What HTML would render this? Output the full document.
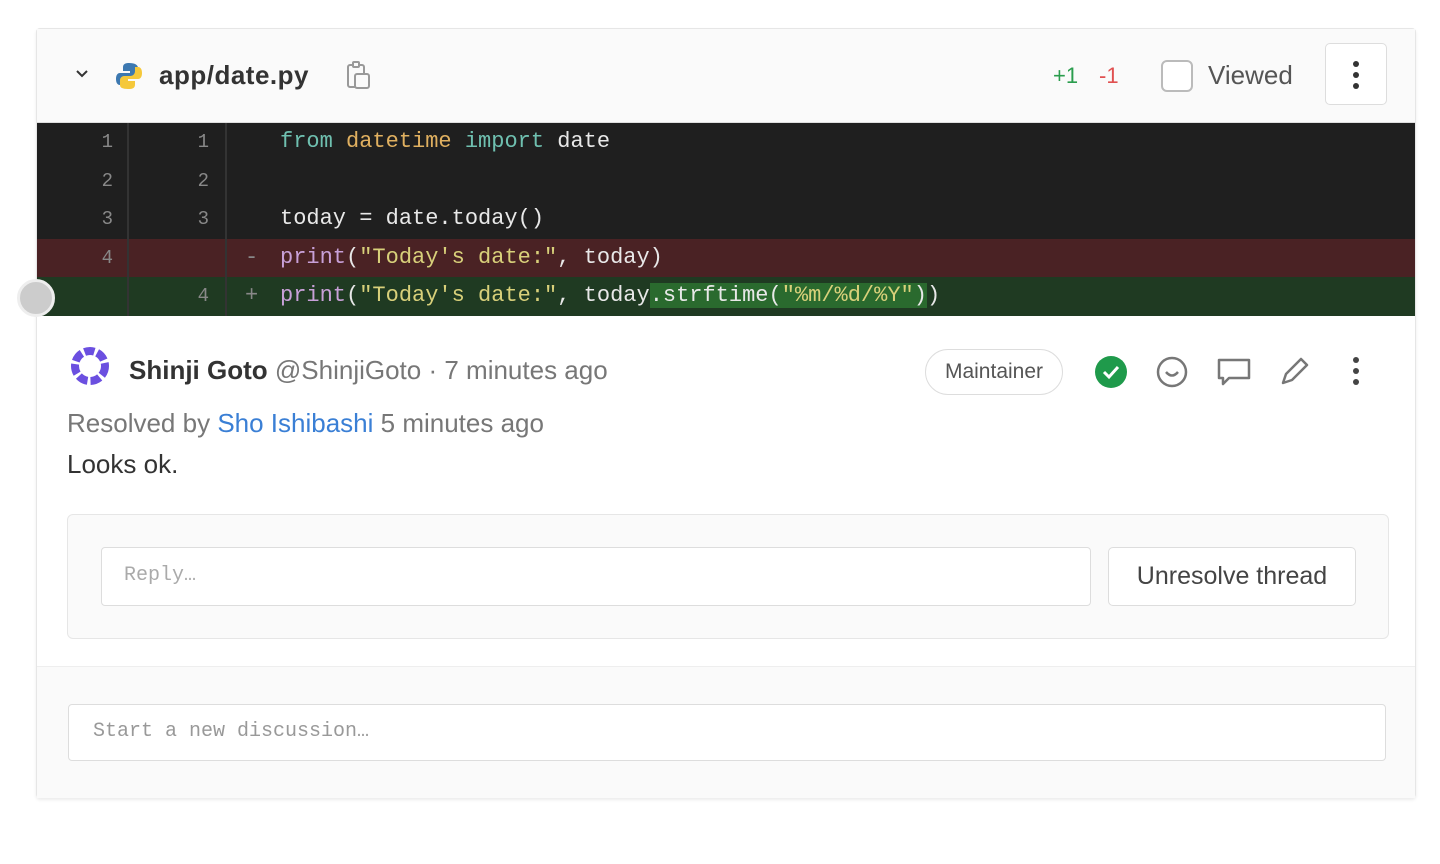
<!DOCTYPE html>
<html><head><meta charset="utf-8"><style>
*{box-sizing:border-box;margin:0;padding:0}
body{width:1440px;height:864px;background:#fff;font-family:"Liberation Sans",sans-serif;position:relative;overflow:hidden}
.card{position:absolute;left:36px;top:28px;width:1380px;height:770px;border:1px solid #e6e6e6;border-radius:4px;background:#fff;box-shadow:0 2px 3px rgba(0,0,0,.08)}
.hdr{position:absolute;left:0;top:0;width:100%;height:94px;background:#fafafa;border-bottom:1px solid #ddd}
.abs{position:absolute}
.code{position:absolute;left:0;top:94px;width:100%;height:192px;background:#1f1f1f;font-family:"Liberation Mono",monospace;font-size:22px;color:#e8e8e8}
.row{position:absolute;left:0;width:100%;height:38.5px;line-height:38.5px}
.ln{position:absolute;width:76px;text-align:right;color:#888;font-size:19px}
.g1{left:0;width:92px;height:100%;border-right:2px solid #333}
.g2{left:92px;width:98px;height:100%;border-right:2px solid #333}
.txt{position:absolute;left:243px;white-space:pre}
.kw{color:#6fc0b0}.mod{color:#e0b060}.fn{color:#c8a0d8}.str{color:#d8d07a}
.grey{color:#888}
.btn{border:1px solid #ddd;border-radius:5px;background:#fff}
</style></head><body>
<div class="card">
 <div class="hdr">
  <svg class="abs" style="left:38px;top:40px" width="14" height="10"><path d="M2 2l5 5 5-5" stroke="#333" stroke-width="2" fill="none"/></svg>
  <svg class="abs" style="left:78px;top:32px" width="28" height="30" viewBox="0 0 28 30"><path d="M14 2c-6 0-6 3-6 5v3h7v2H5c-3 0-4 3-4 6s1 6 4 6h3v-4c0-3 2-5 5-5h6c2 0 4-2 4-4V7c0-3-3-5-9-5z" fill="#3c78b0"/><path d="M14 28c6 0 6-3 6-5v-3h-7v-2h10c3 0 4-3 4-6s-1-6-4-6h-3v4c0 3-2 5-5 5H9c-2 0-4 2-4 4v5c0 3 3 4 9 4z" fill="#f5c83a"/></svg>
  <div class="abs" style="left:122px;top:31px;font-size:26px;font-weight:bold;color:#333;letter-spacing:0.5px">app/date.py</div>
  <svg class="abs" style="left:306px;top:30px" width="30" height="34"><rect x="5" y="6" width="16" height="22" rx="2" stroke="#999" stroke-width="2" fill="none"/><rect x="10" y="3" width="6" height="5" rx="1" stroke="#999" stroke-width="2" fill="#fafafa"/><rect x="12" y="15" width="14" height="14" rx="2" stroke="#999" stroke-width="2" fill="#fafafa"/></svg>
  <div class="abs" style="left:1016px;top:34px;font-size:22px;color:#2a9d4d">+1</div>
  <div class="abs" style="left:1062px;top:34px;font-size:22px;color:#e05050">-1</div>
  <div class="abs" style="left:1124px;top:31px;width:32px;height:32px;border:2px solid #bbb;border-radius:6px;background:#fff"></div>
  <div class="abs" style="left:1171px;top:31px;font-size:26px;color:#555">Viewed</div>
  <div class="abs btn" style="left:1288px;top:14px;width:62px;height:62px"><svg style="position:absolute;left:26px;top:16px" width="8" height="30"><circle cx="4" cy="4" r="3" fill="#333"/><circle cx="4" cy="15" r="3" fill="#333"/><circle cx="4" cy="26" r="3" fill="#333"/></svg></div>
 </div>
 <div class="code">
  <div class="row" style="top:0"><div class="abs g1"></div><div class="abs g2"></div><div class="ln" style="left:0">1</div><div class="ln" style="left:96px">1</div><div class="txt"><span class="kw">from</span> <span class="mod">datetime</span> <span class="kw">import</span> date</div></div>
  <div class="row" style="top:38.5px"><div class="abs g1"></div><div class="abs g2"></div><div class="ln" style="left:0">2</div><div class="ln" style="left:96px">2</div></div>
  <div class="row" style="top:77px"><div class="abs g1"></div><div class="abs g2"></div><div class="ln" style="left:0">3</div><div class="ln" style="left:96px">3</div><div class="txt">today = date.today()</div></div>
  <div class="row" style="top:115.5px;background:#4a2224"><div class="abs g1"></div><div class="abs g2"></div><div class="ln" style="left:0">4</div><div class="abs grey" style="left:208px">-</div><div class="txt"><span class="fn">print</span>(<span class="str">"Today's date:"</span>, today)</div></div>
  <div class="row" style="top:154px;background:#1f3a22"><div class="abs g1"></div><div class="abs g2"></div><div class="ln" style="left:96px">4</div><div class="abs grey" style="left:208px">+</div><div class="txt"><span class="fn">print</span>(<span class="str">"Today's date:"</span>, today<span style="background:#2a6a2e">.strftime(<span class="str">"%m/%d/%Y"</span>)</span>)</div></div>
 </div>
 <div class="abs" style="left:-20px;top:250px;width:38px;height:38px;border-radius:50%;background:#ccc;border:3px solid #eee"></div>
 <svg class="abs" style="left:32px;top:316px" width="42" height="42"><circle cx="21" cy="21" r="15" stroke="#6b4fe0" stroke-width="8" fill="none" stroke-dasharray="10 3"/></svg>
 <div class="abs" style="left:92px;top:326px;font-size:26px;color:#333"><b>Shinji Goto</b> <span style="color:#777">@ShinjiGoto · 7 minutes ago</span></div>
 <div class="abs" style="left:888px;top:320px;width:138px;height:46px;border:1px solid #ddd;border-radius:23px;font-size:21px;color:#555;text-align:center;line-height:44px">Maintainer</div>
 <svg class="abs" style="left:1057px;top:326px" width="34" height="34"><circle cx="17" cy="17" r="16" fill="#1f9a4b"/><path d="M10 17l5 5 9-10" stroke="#fff" stroke-width="3" fill="none"/></svg>
 <svg class="abs" style="left:1118px;top:326px" width="34" height="34"><circle cx="17" cy="17" r="14" stroke="#777" stroke-width="2.5" fill="none"/><path d="M11 17q6 7 12 0" stroke="#777" stroke-width="2.5" fill="none"/></svg>
 <svg class="abs" style="left:1178px;top:326px" width="38" height="34"><path d="M4 5h30v18H14l-6 6v-6H4z" stroke="#777" stroke-width="2.5" fill="none" stroke-linejoin="round"/></svg>
 <svg class="abs" style="left:1240px;top:326px" width="34" height="34"><path d="M6 28l3-9 15-15 6 6-15 15z" stroke="#777" stroke-width="2.5" fill="none" stroke-linejoin="round"/></svg>
 <svg class="abs" style="left:1315px;top:327px" width="8" height="30"><circle cx="4" cy="4" r="3" fill="#444"/><circle cx="4" cy="15" r="3" fill="#444"/><circle cx="4" cy="26" r="3" fill="#444"/></svg>
 <div class="abs" style="left:30px;top:379px;font-size:26px;color:#777">Resolved by <span style="color:#3a7fd5">Sho Ishibashi</span> 5 minutes ago</div>
 <div class="abs" style="left:30px;top:420px;font-size:26px;color:#333">Looks ok.</div>
 <div class="abs" style="left:30px;top:485px;width:1322px;height:125px;background:#fafafa;border:1px solid #e6e6e6;border-radius:6px">
  <div class="abs btn" style="left:33px;top:32px;width:990px;height:59px;font-family:'Liberation Mono',monospace;font-size:20px;color:#aaa;padding:16px 22px;border-radius:4px">Reply…</div>
  <div class="abs btn" style="left:1040px;top:32px;width:248px;height:59px;font-size:25px;color:#444;text-align:center;line-height:57px">Unresolve thread</div>
 </div>
 <div class="abs" style="left:0;top:637px;width:100%;height:132px;background:#fafafa;border-top:1px solid #eee">
  <div class="abs btn" style="left:31px;top:37px;width:1318px;height:57px;font-family:'Liberation Mono',monospace;font-size:20px;color:#999;padding:15px 24px;border-radius:4px">Start a new discussion…</div>
 </div>
</div>
</body></html>
